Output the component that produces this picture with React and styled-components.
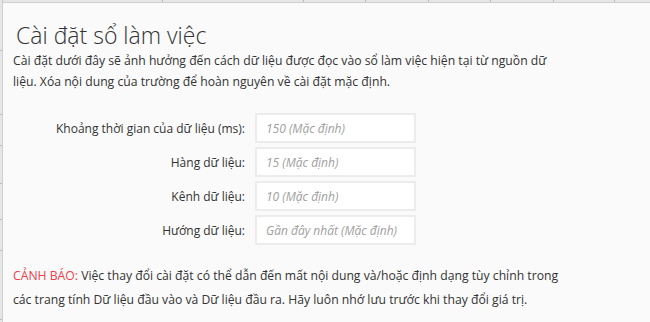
import React from 'react';
import styled, { createGlobalStyle } from 'styled-components';

const GlobalStyle = createGlobalStyle`
  html, body {
    margin: 0;
    padding: 0;
    background: #fafafa;
  }
  body {
    font-family: "Open Sans", "Noto Sans", sans-serif;
    color: #333;
  }
`

const Frame = styled.div`
  width: 650px;
  height: 322px;
  display: grid;
  grid-template-columns: 3px 1fr;
  grid-template-rows: 3px 1fr;
  overflow: hidden;
  background: #fafafa;
`
const Corner = styled.div`
  background: #e6e6e6;
  border-right: 1px solid #c8c8c8;
`
const ColHeader = styled.div`
  display: flex;
  background: #e6e6e6;
  border-bottom: 1px solid #d0d0d0;
`
const Col = styled.div`
  flex: 0 0 ${p => p.w}px;
  border-right: 1px solid #bdbdbd;
`
const RowHeader = styled.div`
  display: flex;
  flex-direction: column;
  background: #e6e6e6;
  border-right: 1px solid #cfcfcf;
`
const Row = styled.div`
  flex: 0 0 ${p => p.h}px;
  border-bottom: 1px solid #bdbdbd;
`

const Panel = styled.section`
  padding: 17px 0 0 10px;
  width: 548px;
`
const Title = styled.h1`
  margin: 0 0 0 3px;
  font-size: 23px;
  font-weight: 300;
  line-height: 30px;
  color: #333;
`
const Desc = styled.p`
  margin: 0;
  font-size: 12.2px;
  line-height: 21px;
`
const Form = styled.div`
  display: grid;
  grid-template-columns: 232px 161px;
  column-gap: 10px;
  row-gap: 4px;
  margin-top: 21px;
  align-items: center;
`
const Label = styled.label`
  text-align: right;
  font-size: 12px;
`
const Input = styled.input`
  box-sizing: border-box;
  width: 161px;
  height: 30px;
  border: 2px solid #ececec;
  background: #fff;
  padding: 0 9px;
  font-family: inherit;
  font-size: 12px;
  outline: none;
  &::placeholder {
    color: #a0a0a0;
    font-style: italic;
  }
`
const Warning = styled.p`
  margin: 19px 0 0 0;
  font-size: 12.2px;
  line-height: 24px;
`
const Red = styled.span`
  color: #ee3f4b;
`

const fields = [
  ['Khoảng thời gian của dữ liệu (ms):', '150 (Mặc định)'],
  ['Hàng dữ liệu:', '15 (Mặc định)'],
  ['Kênh dữ liệu:', '10 (Mặc định)'],
  ['Hướng dữ liệu:', 'Gần đây nhất (Mặc định)'],
]

const cols = [159, 140, 61, 62, 61, 62, 60, 60]
const rows = [47, 63, 30, 37, 35, 30, 68, 30]

export default function App() {
  return (
    <>
      <GlobalStyle />
      <Frame>
        <Corner />
        <ColHeader>
          {cols.map((w, i) => <Col key={i} w={w} />)}
        </ColHeader>
        <RowHeader>
          {rows.map((h, i) => <Row key={i} h={h} />)}
        </RowHeader>
        <Panel>
          <Title>Cài đặt sổ làm việc</Title>
          <Desc>
            Cài đặt dưới đây sẽ ảnh hưởng đến cách dữ liệu được đọc vào sổ làm việc hiện tại từ nguồn dữ liệu. Xóa nội dung của trường để hoàn nguyên về cài đặt mặc định.
          </Desc>
          <Form>
            {fields.map(([label, ph]) => (
              <React.Fragment key={label}>
                <Label>{label}</Label>
                <Input placeholder={ph} />
              </React.Fragment>
            ))}
          </Form>
          <Warning>
            <Red>CẢNH BÁO:</Red> Việc thay đổi cài đặt có thể dẫn đến mất nội dung và/hoặc định dạng tùy chỉnh trong các trang tính Dữ liệu đầu vào và Dữ liệu đầu ra. Hãy luôn nhớ lưu trước khi thay đổi giá trị.
          </Warning>
        </Panel>
      </Frame>
    </>
  );
}
